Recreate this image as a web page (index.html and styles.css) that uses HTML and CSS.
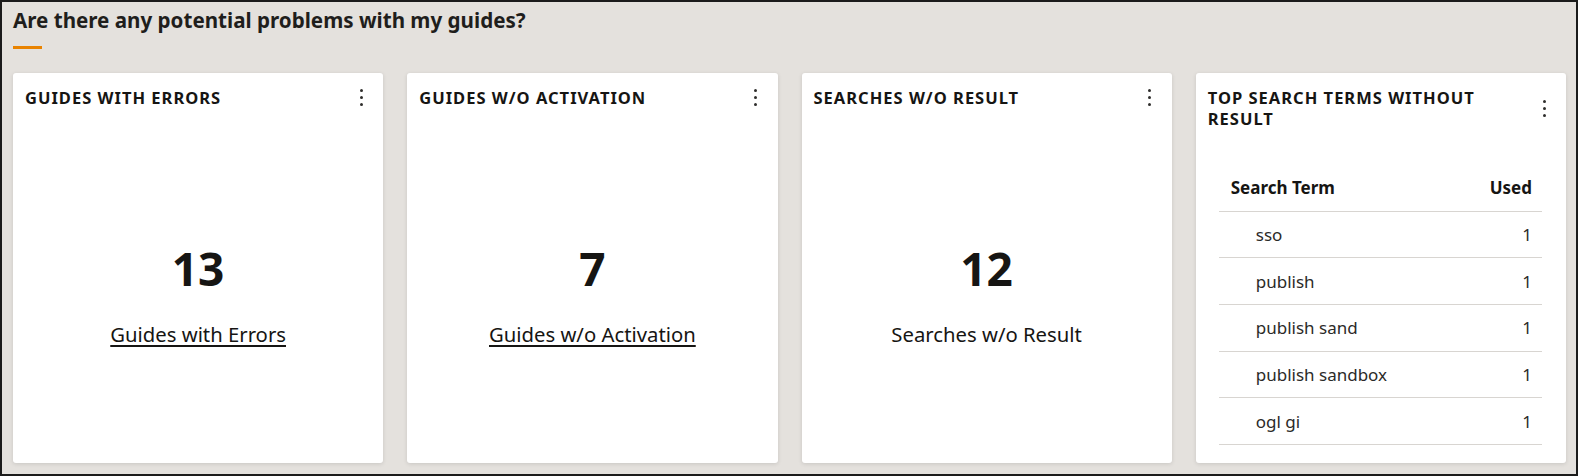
FILE: index.html
```html
<!DOCTYPE html>
<html lang="en">
<head>
<meta charset="utf-8">
<title>Potential problems</title>
<link rel="stylesheet" href="styles.css">
</head>
<body>
<div class="frame">
  <h1 class="page-title">Are there any potential problems with my guides?</h1>
  <div class="accent"></div>
  <div class="cards">
    <section class="card">
      <header class="card-head">
        <h2 class="card-title">GUIDES WITH ERRORS</h2>
        <span class="kebab"><i></i><i></i><i></i></span>
      </header>
      <div class="card-body">
        <div class="metric">13</div>
        <a class="metric-label link" href="#">Guides with Errors</a>
      </div>
    </section>
    <section class="card">
      <header class="card-head">
        <h2 class="card-title">GUIDES W/O ACTIVATION</h2>
        <span class="kebab"><i></i><i></i><i></i></span>
      </header>
      <div class="card-body">
        <div class="metric">7</div>
        <a class="metric-label link" href="#">Guides w/o Activation</a>
      </div>
    </section>
    <section class="card">
      <header class="card-head">
        <h2 class="card-title">SEARCHES W/O RESULT</h2>
        <span class="kebab"><i></i><i></i><i></i></span>
      </header>
      <div class="card-body">
        <div class="metric">12</div>
        <span class="metric-label">Searches w/o Result</span>
      </div>
    </section>
    <section class="card">
      <header class="card-head">
        <h2 class="card-title card-title-narrow">TOP SEARCH TERMS WITHOUT RESULT</h2>
        <span class="kebab"><i></i><i></i><i></i></span>
      </header>
      <table class="terms">
        <thead>
          <tr><th class="col-term">Search Term</th><th class="col-used">Used</th></tr>
        </thead>
        <tbody>
          <tr><td class="col-term">sso</td><td class="col-used">1</td></tr>
          <tr><td class="col-term">publish</td><td class="col-used">1</td></tr>
          <tr><td class="col-term">publish sand</td><td class="col-used">1</td></tr>
          <tr><td class="col-term">publish sandbox</td><td class="col-used">1</td></tr>
          <tr><td class="col-term">ogl gi</td><td class="col-used">1</td></tr>
        </tbody>
      </table>
    </section>
  </div>
</div>
</body>
</html>
```

FILE: styles.css
```css
* { box-sizing: border-box; }

html, body {
  margin: 0;
  padding: 0;
}

body {
  font-family: "Noto Sans", "Open Sans", "Liberation Sans", sans-serif;
  color: #161513;
  background: #ffffff;
}

.frame {
  width: 1578px;
  height: 476px;
  border: 2px solid #1b1b1b;
  background: #e4e1dd;
  padding: 6px 10px 0 11px;
}

.page-title {
  margin: 0;
  font-size: 20.6px;
  line-height: 24px;
  font-weight: 700;
  color: #1f1e1c;
}

.accent {
  width: 29px;
  height: 3px;
  background: #e98300;
  margin-top: 14px;
}

.cards {
  display: grid;
  grid-template-columns: repeat(4, 1fr);
  column-gap: 24px;
  margin-top: 24px;
  width: 1553px;
}

.card {
  height: 390px;
  background: #ffffff;
  border-radius: 3px;
  box-shadow: 0 1px 4px rgba(0, 0, 0, 0.12);
  display: flex;
  flex-direction: column;
}

.card-head {
  display: flex;
  align-items: center;
  justify-content: space-between;
  padding: 14px 16px 0 12px;
}

.card-title {
  margin: 0;
  font-size: 16.5px;
  line-height: 21px;
  font-weight: 700;
  letter-spacing: 1px;
  color: #161513;
}

.card-title-narrow {
  max-width: 290px;
}

.kebab {
  display: flex;
  flex-direction: column;
  align-items: center;
  gap: 4px;
  width: 12px;
}

.kebab i {
  display: block;
  width: 3px;
  height: 3px;
  border-radius: 50%;
  background: #2f2e2c;
}

.card-body {
  flex: 1;
  display: flex;
  flex-direction: column;
  align-items: center;
  padding-top: 132px;
}

.metric {
  font-size: 46px;
  line-height: 56px;
  font-weight: 700;
  color: #161513;
}

.metric-label {
  margin-top: 24px;
  font-size: 20.3px;
  line-height: 28px;
  color: #161513;
}

.link {
  text-decoration: underline;
  text-underline-offset: 3px;
}

.terms {
  margin: 36px 24px 0 23px;
  border-collapse: collapse;
  font-size: 17px;
  color: #161513;
}

.terms th {
  height: 46px;
  font-weight: 700;
  border-bottom: 1px solid #d8d5d1;
  vertical-align: middle;
}

.terms td {
  height: 46.7px;
  border-bottom: 1px solid #d8d5d1;
  vertical-align: middle;
  font-weight: 400;
  color: #2b2a28;
}

.terms th.col-term {
  text-align: left;
  padding-left: 12px;
}

.terms td.col-term {
  text-align: left;
  padding-left: 37px;
}

.terms .col-used {
  text-align: right;
  padding-right: 10px;
}
```
